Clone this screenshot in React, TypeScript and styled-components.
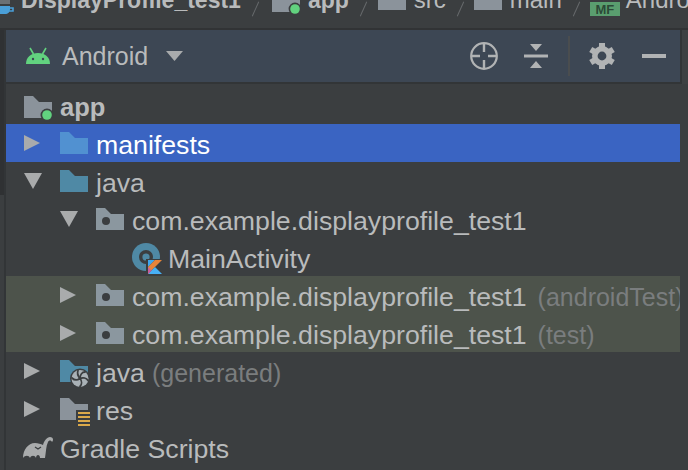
import React from 'react'
import styled, { createGlobalStyle } from 'styled-components'

const GlobalStyle = createGlobalStyle`
  html, body {
    margin: 0;
    padding: 0;
    background: #3b3e40;
    overflow: hidden;
  }
`

const Page = styled.div`
  width: 688px;
  height: 470px;
  overflow: hidden;
  display: flex;
  flex-direction: column;
  background: #3b3e40;
  color: #b9bbbc;
  font-family: 'Liberation Sans', Arial, sans-serif;
  font-size: 25px;
`

const Breadcrumbs = styled.div`
  height: 28px;
  flex: none;
  display: flex;
  align-items: flex-start;
  overflow: hidden;
  white-space: nowrap;
  border-bottom: 2px solid #313335;
`

// the bar is scrolled so that its middle sits on the top edge of the picture
const CrumbGroup = styled.div`
  display: flex;
  align-items: center;
  height: 44px;
  margin-top: -22px;
  font-size: 24px;
`

const CrumbText = styled.span<{ $bold?: boolean; $left: number }>`
  font-weight: ${({ $bold }) => ($bold ? 700 : 400)};
  font-size: ${({ $bold }) => ($bold ? 23 : 24)}px;
  margin-left: ${({ $left }) => $left}px;
`

const Slash = styled.span`
  display: block;
  flex: none;
  width: 1px;
  height: 16px;
  margin: 18px 13px 0 14px;
  background: #66696b;
  transform: rotate(24deg);
`

const CrumbIcon = styled.svg<{ $left?: number }>`
  display: block;
  flex: none;
  margin-left: ${({ $left }) => $left ?? 0}px;
`

const Badge = styled.span`
  flex: none;
  width: 30px;
  height: 14px;
  margin: 18px 6px 0 0;
  background: #5a9e6f;
  color: #2c4a37;
  font-size: 13px;
  line-height: 16px;
  font-weight: 700;
  text-align: center;
`

const Body = styled.div`
  flex: 1;
  display: flex;
  min-height: 0;
`

const LeftRail = styled.div`
  flex: none;
  width: 4px;
  border-right: 2px solid #323537;
`

const LeftRailBlock = styled.div`
  height: 165px;
  background: #2f3133;
`

const RightRail = styled.div`
  flex: none;
  width: 8px;
`

const RightRailBlock = styled.div`
  height: 54px;
  border-left: 2px solid #323537;
  background: #3e4143;
`

const Panel = styled.div`
  flex: 1;
  min-width: 0;
  display: flex;
  flex-direction: column;
`

const Header = styled.div`
  height: 52px;
  flex: none;
  display: flex;
  align-items: center;
  background: #3d4754;
  border-bottom: 2px solid #323537;
`

const AndroidLabel = styled.span`
  margin-left: 12px;
`

const Caret = styled.svg`
  display: block;
  margin-left: 18px;
`

const Toolbar = styled.div`
  margin-left: auto;
  display: flex;
  align-items: center;
  padding-right: 14px;
`

const ToolIcon = styled.svg<{ $left: number }>`
  display: block;
  flex: none;
  margin-left: ${({ $left }) => $left}px;
`

const Divider = styled.div`
  width: 2px;
  height: 40px;
  margin-left: 20px;
  background: #4a4d4f;
`

const Tree = styled.div`
  padding-top: 2px;
  display: flex;
  flex-direction: column;
`

const Row = styled.div<{ $indent: number; $tone?: 'selected' | 'test' }>`
  height: 38px;
  flex: none;
  display: flex;
  align-items: center;
  padding-left: ${({ $indent }) => $indent - 6}px;
  white-space: nowrap;
  overflow: hidden;
  background: ${({ $tone }) =>
    $tone === 'selected' ? '#3a64c2' : $tone === 'test' ? '#4d534b' : 'transparent'};
  color: ${({ $tone }) => ($tone === 'selected' ? '#ffffff' : '#b9bbbc')};
`

const ArrowSlot = styled.svg`
  display: block;
  flex: none;
  width: 36px;
  height: 18px;
`

const IconSlot = styled.svg`
  display: block;
  flex: none;
  width: 36px;
  height: 30px;
  overflow: visible;
`

const Label = styled.span<{ $bold?: boolean }>`
  padding-top: 4px;
  font-size: ${({ $bold }) => ($bold ? 25.5 : 26.7)}px;
  font-weight: ${({ $bold }) => ($bold ? 700 : 400)};
`

const Hint = styled.span<{ $gap: number }>`
  margin-left: ${({ $gap }) => $gap}px;
  font-size: 25px;
  color: #7a7d7e;
`

const FOLDER = 'M0 26V4H9L15 10H28V26Z'

const ArrowRight = () => (
  <ArrowSlot viewBox="0 0 36 18">
    <path d="M0 1V17L16 9Z" fill="#a9abac" />
  </ArrowSlot>
)

const ArrowDown = () => (
  <ArrowSlot viewBox="0 0 36 18">
    <path d="M0 1H18L9 17Z" fill="#a9abac" />
  </ArrowSlot>
)

const Folder = ({ color }: { color: string }) => (
  <IconSlot viewBox="0 0 36 30">
    <path d={FOLDER} fill={color} />
  </IconSlot>
)

const ModuleFolder = () => (
  <IconSlot viewBox="0 0 36 30">
    <path d={FOLDER} fill="#8b939b" transform="translate(0 2)" />
    <circle cx="23" cy="25" r="6.5" fill="#3b3e40" />
    <circle cx="23" cy="25" r="4.8" fill="#62d27f" />
  </IconSlot>
)

const PackageFolder = () => (
  <IconSlot viewBox="0 0 36 30">
    <path d={FOLDER} fill="#8b979f" />
    <circle cx="10" cy="17" r="4" fill="#3b3e40" />
  </IconSlot>
)

const KotlinClass = () => (
  <IconSlot viewBox="0 0 36 30">
    <circle cx="14" cy="15" r="14" fill="#4f89a5" />
    <circle cx="14" cy="15" r="7" fill="#3b3e40" />
    <circle cx="14" cy="15" r="3.6" fill="#4f89a5" />
    <path d="M14 17h17v16H14z" fill="#3b3e40" />
    <path d="M16 18H23L16 25Z" fill="#3fa7ee" />
    <path d="M16 25L23 18H30L16 32Z" fill="#e8843a" />
    <path d="M16 32L23 25L30 32Z" fill="#48b0f5" />
    <path d="M16 25L19.5 28.5L16 32Z" fill="#c75b9b" />
  </IconSlot>
)

const GeneratedFolder = () => (
  <IconSlot viewBox="0 0 36 30">
    <path d={FOLDER} fill="#4f89a5" />
    <circle cx="20" cy="22.5" r="10" fill="#3b3e40" />
    <circle cx="20" cy="22.5" r="8.5" fill="#a9b1b6" />
    <g stroke="#3b3e40" strokeWidth="1.8" fill="none" strokeLinecap="round">
      <path d="M20 22.5C20 19 22 16 25 16" />
      <path d="M20 22.5C23 21 26.5 22 28 24.5" />
      <path d="M20 22.5C22 25 22 28.5 20 30.5" />
      <path d="M20 22.5C17 24.5 14 24 12 22" />
      <path d="M20 22.5C18 20 17 17 18 14.5" />
    </g>
    <circle cx="20" cy="22.5" r="1.4" fill="#3b3e40" />
  </IconSlot>
)

const ResFolder = () => (
  <IconSlot viewBox="0 0 36 30">
    <path d={FOLDER} fill="#8b939b" />
    <path d="M16 16H32V32H16Z" fill="#3b3e40" />
    <g fill="#dba94a">
      <rect x="18" y="18" width="12" height="2" />
      <rect x="18" y="22" width="12" height="2" />
      <rect x="18" y="26" width="12" height="2" />
      <rect x="18" y="30" width="12" height="2" />
    </g>
  </IconSlot>
)

const GradleIcon = () => (
  <IconSlot viewBox="0 0 36 30">
    <path
      d="M-1 26C-1 18 4 11 11 11C14 11 17 12 19 13C20 9 23 5 26 5C29 5 30 8 28 10C27 8 25 8 24 10C22 14 22 20 21 26H16C16 22 12 22 12 26C11 23 7 23 6 26C5 23 1 23 -1 26Z"
      fill="#a9abac"
    />
    <path d="M11 15L14 17L17 15" fill="none" stroke="#3b3e40" strokeWidth="1.3" />
  </IconSlot>
)

const GEAR_TEETH = [0, 60, 120, 180, 240, 300]

export default function App() {
  return (
    <Page>
      <GlobalStyle />
      <Breadcrumbs>
        <CrumbGroup>
          <CrumbIcon width="14" height="44" viewBox="0 -22 14 44">
            <path d="M-2 0H10V4H-2Z" fill="#6b7074" />
            <path d="M-2 6H10V9C10 12 8 14 5 14H-2Z" fill="#4a9fd8" />
            <path d="M10 8H13V11H9" fill="none" stroke="#4a9fd8" strokeWidth="1.6" />
          </CrumbIcon>
          <CrumbText $bold $left={7}>DisplayProfile_test1</CrumbText>
          <Slash />
          <CrumbIcon $left={3} width="28" height="44" viewBox="0 -22 28 44">
            <path d="M0 12V0H28V12Z" fill="#8b939b" />
            <circle cx="23" cy="9" r="6.4" fill="#3b3e40" />
            <circle cx="23" cy="9" r="4.8" fill="#62d27f" />
          </CrumbIcon>
          <CrumbText $bold $left={8}>app</CrumbText>
          <Slash />
          <CrumbIcon $left={1} width="28" height="44" viewBox="0 -22 28 44">
            <path d="M0 10V0H28V10Z" fill="#8b939b" />
          </CrumbIcon>
          <CrumbText $left={8}>src</CrumbText>
          <Slash />
          <CrumbIcon width="28" height="44" viewBox="0 -22 28 44">
            <path d="M0 10V0H28V10Z" fill="#8b939b" />
          </CrumbIcon>
          <CrumbText $left={8}>main</CrumbText>
          <Slash />
          <Badge>MF</Badge>
          <CrumbText $left={0}>AndroidManifest.xml</CrumbText>
        </CrumbGroup>
      </Breadcrumbs>
      <Body>
        <LeftRail>
          <LeftRailBlock />
        </LeftRail>
        <Panel>
          <Header>
            <CrumbIcon $left={20} width="24" height="18" viewBox="0 0 24 18">
              <path d="M0 17C0 10 5 6 12 6C19 6 24 10 24 17Z" fill="#62d27f" />
              <path d="M4 1L7.5 7M20 1L16.5 7" stroke="#62d27f" strokeWidth="1.6" />
              <circle cx="7" cy="12" r="1.2" fill="#3d4754" />
              <circle cx="17" cy="12" r="1.2" fill="#3d4754" />
            </CrumbIcon>
            <AndroidLabel>Android</AndroidLabel>
            <Caret width="17" height="10" viewBox="0 0 17 10">
              <path d="M0 0H17L8.5 10Z" fill="#a9abac" />
            </Caret>
            <Toolbar>
              <ToolIcon $left={0} width="28" height="28" viewBox="0 0 28 28">
                <circle cx="14" cy="14" r="12.8" fill="none" stroke="#b1b3b4" strokeWidth="2.2" />
                <path d="M14 1V10M14 18V27M1 14H10M18 14H27" stroke="#b1b3b4" strokeWidth="2.4" />
              </ToolIcon>
              <ToolIcon $left={26} width="24" height="24" viewBox="0 0 24 24">
                <path d="M0 10.5H24V13.5H0Z" fill="#b1b3b4" />
                <path d="M6 0H18L12 7ZM6 24H18L12 17Z" fill="#b1b3b4" />
              </ToolIcon>
              <Divider />
              <ToolIcon $left={19} width="26" height="26" viewBox="-13 -13 26 26">
                <circle r="7.2" fill="none" stroke="#b1b3b4" strokeWidth="5.6" />
                {GEAR_TEETH.map(angle => (
                  <rect key={angle} x="-3" y="-13" width="6" height="5" fill="#b1b3b4" transform={`rotate(${angle})`} />
                ))}
              </ToolIcon>
              <ToolIcon $left={27} width="24" height="4" viewBox="0 0 24 4">
                <path d="M0 0H24V4H0Z" fill="#b1b3b4" />
              </ToolIcon>
            </Toolbar>
          </Header>
          <Tree>
            <Row $indent={24}>
              <ModuleFolder />
              <Label $bold>app</Label>
            </Row>
            <Row $indent={24} $tone="selected">
              <ArrowRight />
              <Folder color="#5191d1" />
              <Label>manifests</Label>
            </Row>
            <Row $indent={24}>
              <ArrowDown />
              <Folder color="#4f89a5" />
              <Label>java</Label>
            </Row>
            <Row $indent={60}>
              <ArrowDown />
              <PackageFolder />
              <Label>com.example.displayprofile_test1</Label>
            </Row>
            <Row $indent={132}>
              <KotlinClass />
              <Label>MainActivity</Label>
            </Row>
            <Row $indent={60} $tone="test">
              <ArrowRight />
              <PackageFolder />
              <Label>
                com.example.displayprofile_test1<Hint $gap={11}>(androidTest)</Hint>
              </Label>
            </Row>
            <Row $indent={60} $tone="test">
              <ArrowRight />
              <PackageFolder />
              <Label>
                com.example.displayprofile_test1<Hint $gap={11}>(test)</Hint>
              </Label>
            </Row>
            <Row $indent={24}>
              <ArrowRight />
              <GeneratedFolder />
              <Label>
                java<Hint $gap={7}>(generated)</Hint>
              </Label>
            </Row>
            <Row $indent={24}>
              <ArrowRight />
              <ResFolder />
              <Label>res</Label>
            </Row>
            <Row $indent={24}>
              <GradleIcon />
              <Label>Gradle Scripts</Label>
            </Row>
          </Tree>
        </Panel>
        <RightRail>
          <RightRailBlock />
        </RightRail>
      </Body>
    </Page>
  )
}
